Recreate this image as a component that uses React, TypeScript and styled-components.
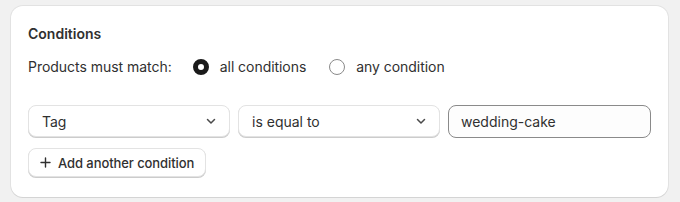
import React from "react";
import styled, { createGlobalStyle } from "styled-components";

const Global = createGlobalStyle`
  html, body { margin: 0; padding: 0; background: #f1f1f1; }
  body { font-family: Inter, "Noto Sans", sans-serif; color: #303030; -webkit-font-smoothing: antialiased; }
`;

const Page = styled.div`
  padding: 6px 12px 6px 11px;
`;

const Card = styled.section`
  background: #fff;
  border-radius: 12px;
  box-shadow: 0 1px 0 0 rgba(26,26,26,0.07), 0 0 0 1px rgba(0,0,0,0.06);
  padding: 18px 16px 20px 17px;
  display: flex;
  flex-direction: column;
`;

const Title = styled.h2`
  margin: 0;
  font-size: 14px;
  font-weight: 600;
  line-height: 20px;
`;

const MatchRow = styled.div`
  display: flex;
  align-items: center;
  margin-top: 13px;
  font-size: 14px;
  line-height: 20px;
`;

const Label = styled.span`
  margin-right: 21px;
  letter-spacing: -0.03px;
`;

const RadioOption = styled.label`
  display: flex;
  align-items: center;
  gap: 11px;
  margin-right: 23px;
  letter-spacing: -0.05px;
`;

const RadioDot = styled.span<{ $checked?: boolean }>`
  box-sizing: border-box;
  width: 16px;
  height: 16px;
  border-radius: 50%;
  background: #fff;
  border: ${(p) => (p.$checked ? "5px solid #1a1a1a" : "1px solid #8a8a8a")};
`;

const FieldRow = styled.div`
  display: grid;
  grid-template-columns: 202px 202px 203px;
  column-gap: 8px;
  margin-top: 28px;
`;

const Select = styled.div`
  box-sizing: border-box;
  height: 32px;
  display: flex;
  align-items: center;
  justify-content: space-between;
  padding: 0 12px 0 13px;
  border-radius: 8px;
  background: #fff;
  border: 1px solid #e3e3e3;
  box-shadow: 0 1px 0 0 #cccccc;
  font-size: 14px;
`;

const Input = styled.div`
  box-sizing: border-box;
  height: 33px;
  display: flex;
  align-items: center;
  padding: 0 12px;
  border-radius: 8px;
  background: #fdfdfd;
  border: 1px solid #8a8a8a;
  font-size: 14px;
`;

const Button = styled.button`
  align-self: flex-start;
  box-sizing: border-box;
  margin-top: 10px;
  height: 29px;
  display: flex;
  align-items: center;
  gap: 7px;
  padding: 0 11px 0 11px;
  border-radius: 8px;
  background: #fff;
  border: 1px solid #e3e3e3;
  box-shadow: 0 1px 0 0 #cccccc;
  font-family: inherit;
  font-size: 13px;
  font-weight: 500;
  letter-spacing: -0.08px;
  color: #303030;
`;

const Chevron = () => (
  <svg width="12" height="12" viewBox="0 0 12 12" fill="none">
    <path d="M2.5 4.5 6 8l3.5-3.5" stroke="#4a4a4a" strokeWidth="1.5" strokeLinecap="round" strokeLinejoin="round" />
  </svg>
);

const Plus = () => (
  <svg width="11" height="11" viewBox="0 0 11 11" fill="none">
    <path d="M5.5 1v9M1 5.5h9" stroke="#303030" strokeWidth="1.4" strokeLinecap="round" />
  </svg>
);

export default function App() {
  return (
    <>
      <Global />
      <Page>
        <Card>
          <Title>Conditions</Title>
          <MatchRow>
            <Label>Products must match:</Label>
            <RadioOption>
              <RadioDot $checked />
              all conditions
            </RadioOption>
            <RadioOption>
              <RadioDot />
              any condition
            </RadioOption>
          </MatchRow>
          <FieldRow>
            <Select>
              <span>Tag</span>
              <Chevron />
            </Select>
            <Select>
              <span>is equal to</span>
              <Chevron />
            </Select>
            <Input>wedding-cake</Input>
          </FieldRow>
          <Button>
            <Plus />
            Add another condition
          </Button>
        </Card>
      </Page>
    </>
  );
}
